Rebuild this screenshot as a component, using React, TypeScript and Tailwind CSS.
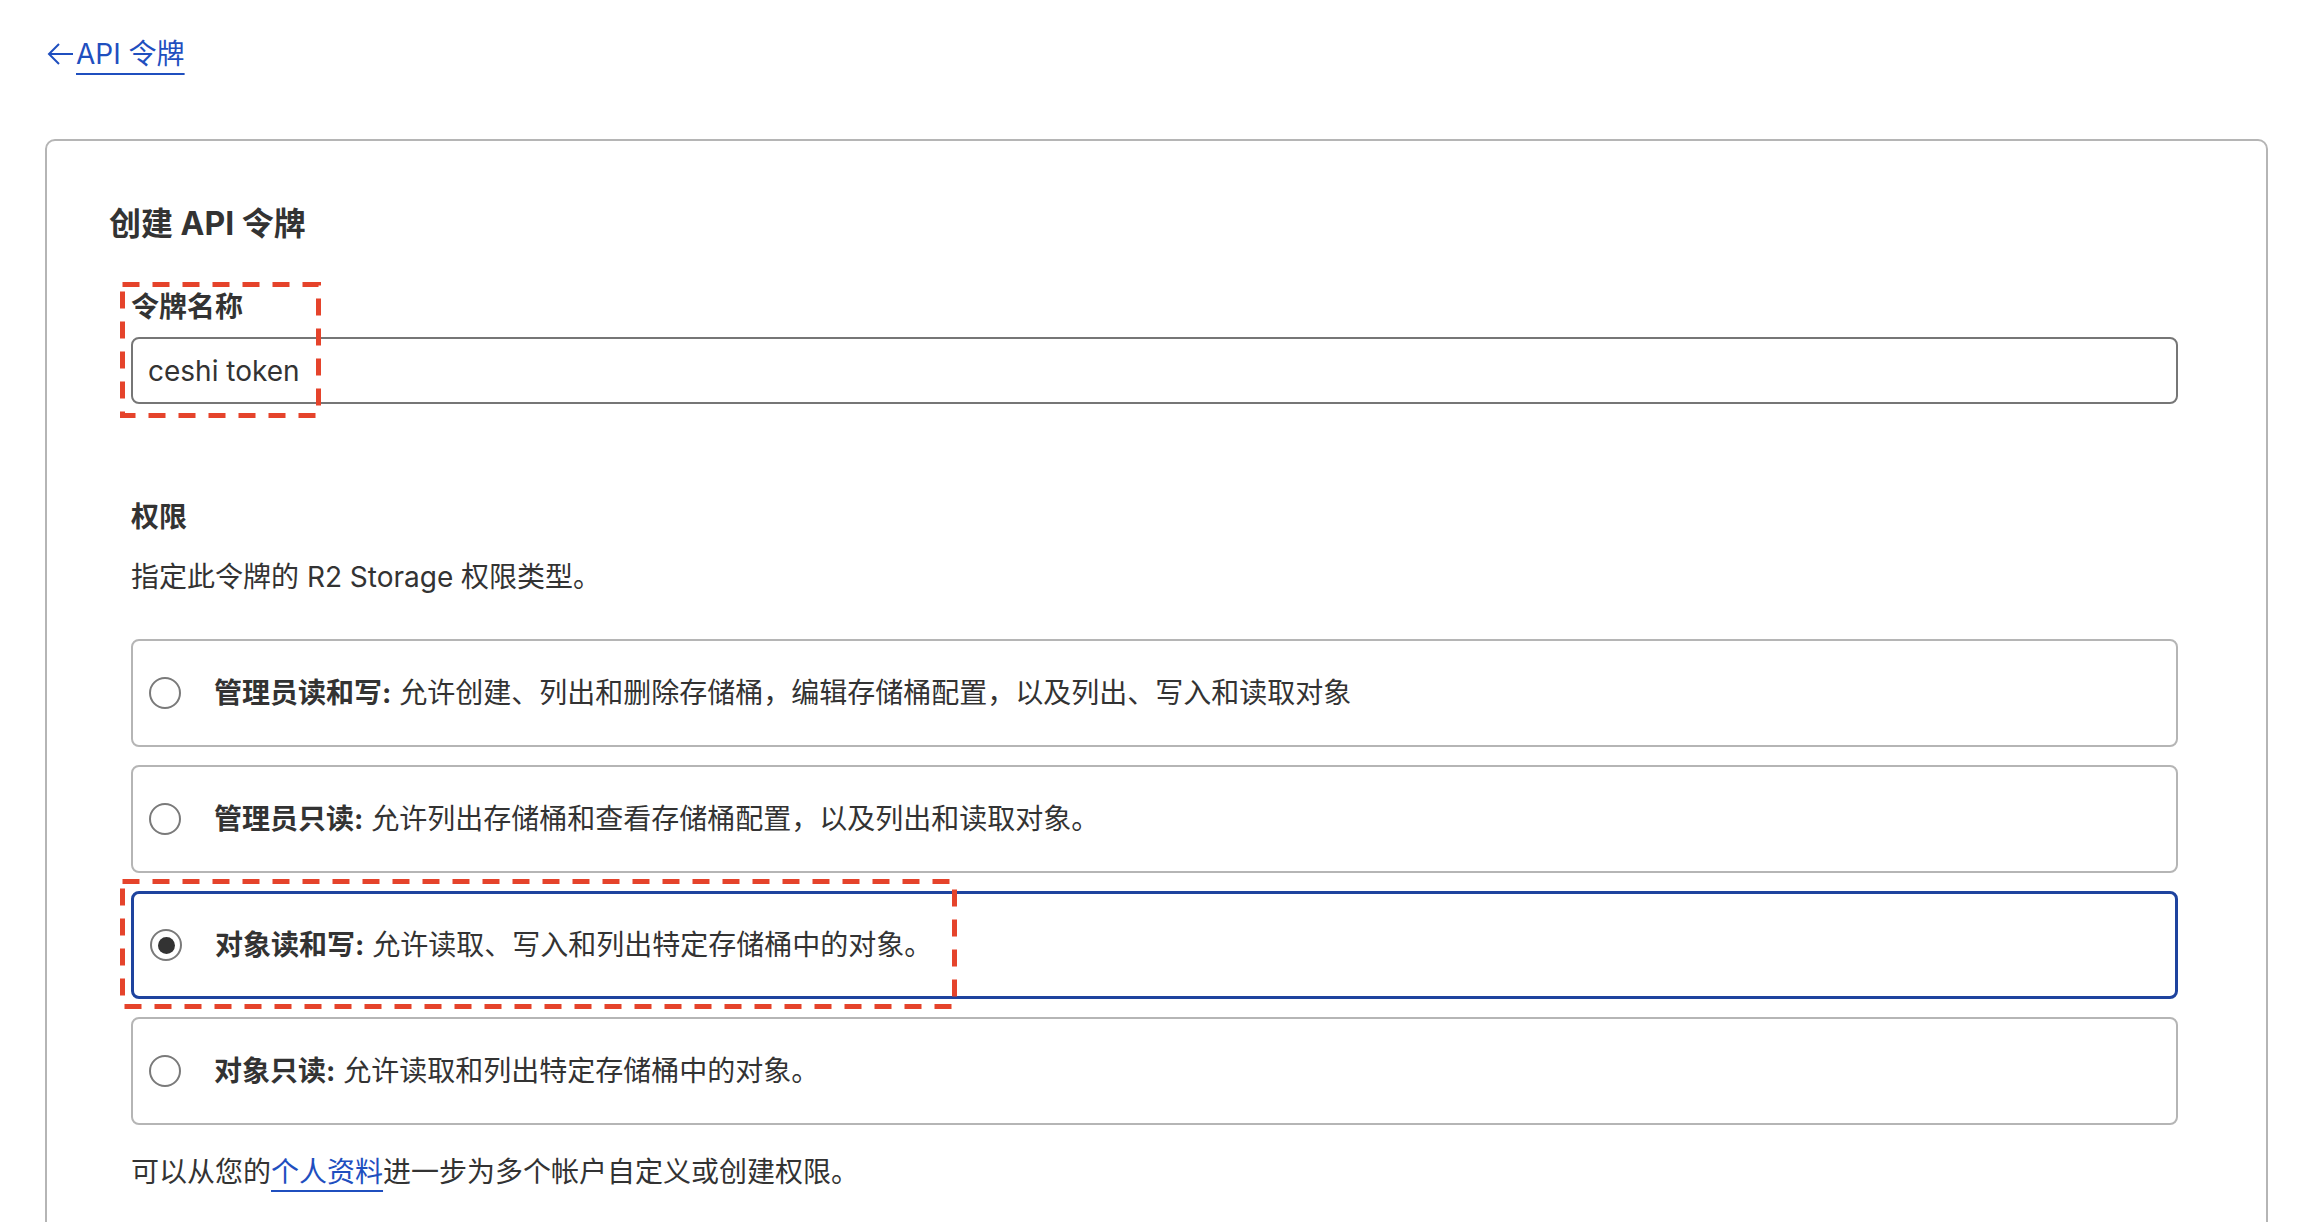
const options = [
  { key: "admin-rw", title: "管理员读和写:", desc: "允许创建、列出和删除存储桶，编辑存储桶配置，以及列出、写入和读取对象" },
  { key: "admin-r", title: "管理员只读:", desc: "允许列出存储桶和查看存储桶配置，以及列出和读取对象。" },
  { key: "obj-rw", title: "对象读和写:", desc: "允许读取、写入和列出特定存储桶中的对象。" },
  { key: "obj-r", title: "对象只读:", desc: "允许读取和列出特定存储桶中的对象。" },
];

function DashedMark({ className }: { className: string }) {
  return (
    <svg className={`pointer-events-none absolute ${className}`} preserveAspectRatio="none">
      <rect
        x="2.5"
        y="2.5"
        width="calc(100% - 5px)"
        height="calc(100% - 5px)"
        fill="none"
        stroke="#e5432b"
        strokeWidth="5"
        strokeDasharray="17 13"
      />
    </svg>
  );
}

function Radio({ checked }: { checked: boolean }) {
  return (
    <span className="flex h-[32px] w-[32px] shrink-0 items-center justify-center rounded-full border-2 border-[#7a7a7a] bg-white">
      {checked && <span className="h-[17px] w-[17px] rounded-full bg-[#333]" />}
    </span>
  );
}

export default function App() {
  const selected = "obj-rw";

  return (
    <div
      className="min-h-screen bg-white text-[#333]"
      style={{ fontFamily: 'Inter, "Noto Sans CJK SC", sans-serif' }}
    >
      <div className="px-[47px] pt-[36px]">
        <a href="#" className="inline-flex items-center text-[28px] leading-[36px] text-[#1f4fbf]">
          <svg width="27" height="24" viewBox="0 0 27 24" fill="none" stroke="currentColor" strokeWidth="2" className="mr-[2px]">
            <path d="M26 12H2M12 2 2 12l10 10" />
          </svg>
          <span className="underline decoration-2 underline-offset-[9px]">API 令牌</span>
        </a>
      </div>

      <div className="ml-[45px] mr-[44px] mt-[67px] rounded-[10px] border-2 border-[#b5b5b5] pb-[120px] pl-[62px] pr-[88px] pt-[63px]">
        <h1 className="text-[32px] font-bold leading-[40px] text-[#333]">创建 API 令牌</h1>

        <div className="ml-[22px]">
          <div className="relative mt-[45px]">
            <label className="block text-[28px] font-bold leading-[36px]">令牌名称</label>
            <div className="mt-[12px] flex h-[67px] items-center rounded-[8px] border-2 border-[#767676] px-[15px] text-[28px]">
              ceshi token
            </div>
            <DashedMark className="left-[-11px] top-[-7px] h-[136px] w-[201px]" />
          </div>

          <div className="mt-[95px] text-[28px] font-bold leading-[36px]">权限</div>
          <p className="mt-[24px] text-[28px] leading-[36px]">指定此令牌的 R2 Storage 权限类型。</p>

          <div className="mt-[44px] flex flex-col gap-[18px]">
            {options.map((o) => {
              const on = o.key === selected;
              return (
                <div key={o.key} className="relative">
                  <div
                    className={`flex h-[108px] items-center rounded-[8px] pl-[16px] ${
                      on ? "border-[3px] border-[#1e439e]" : "border-2 border-[#b5b5b5]"
                    }`}
                  >
                    <Radio checked={on} />
                    <span className="ml-[33px] text-[28px] leading-[40px]">
                      <b className="font-bold">{o.title}</b> {o.desc}
                    </span>
                  </div>
                  {on && <DashedMark className="left-[-11px] top-[-12px] h-[130px] w-[837px]" />}
                </div>
              );
            })}
          </div>

          <p className="mt-[29px] text-[28px] leading-[36px]">
            可以从您的
            <a href="#" className="text-[#1f4fbf] underline decoration-2 underline-offset-[8px]">
              个人资料
            </a>
            进一步为多个帐户自定义或创建权限。
          </p>
        </div>
      </div>
    </div>
  );
}
